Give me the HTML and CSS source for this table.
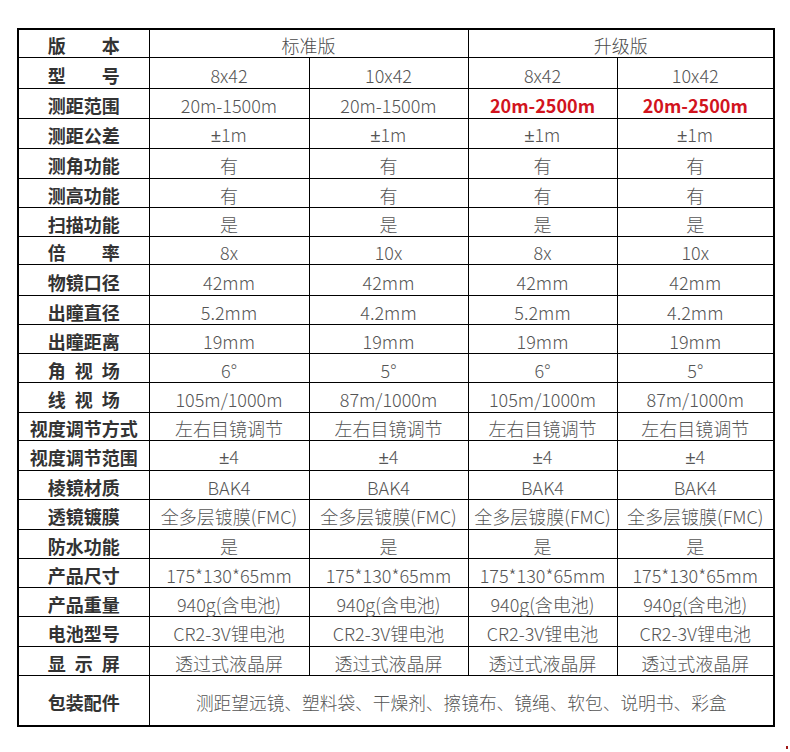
FILE: index.html
```html
<!DOCTYPE html>
<html lang="zh-CN">
<head>
<meta charset="utf-8">
<title>规格参数</title>
<link rel="stylesheet" href="styles.css">
</head>
<body>
<div class="page">
<table class="spec">
  <colgroup>
    <col class="c-label"><col class="c-a"><col class="c-b"><col class="c-c"><col class="c-d">
  </colgroup>
  <tr class="h28"><th><span class="jt">版本</span></th><td colspan="2" class="head">标准版</td><td colspan="2" class="head">升级版</td></tr>
  <tr class="h31"><th><span class="jt">型号</span></th><td>8x42</td><td>10x42</td><td>8x42</td><td>10x42</td></tr>
  <tr class="h30"><th>测距范围</th><td>20m-1500m</td><td>20m-1500m</td><td class="red">20m-2500m</td><td class="red">20m-2500m</td></tr>
  <tr class="h29"><th>测距公差</th><td><span class="pm">±</span>1m</td><td><span class="pm">±</span>1m</td><td><span class="pm">±</span>1m</td><td><span class="pm">±</span>1m</td></tr>
  <tr class="h30"><th>测角功能</th><td>有</td><td>有</td><td>有</td><td>有</td></tr>
  <tr class="h29"><th>测高功能</th><td>有</td><td>有</td><td>有</td><td>有</td></tr>
  <tr class="h29"><th>扫描功能</th><td>是</td><td>是</td><td>是</td><td>是</td></tr>
  <tr class="h28"><th><span class="jt">倍率</span></th><td>8x</td><td>10x</td><td>8x</td><td>10x</td></tr>
  <tr class="h31"><th>物镜口径</th><td>42mm</td><td>42mm</td><td>42mm</td><td>42mm</td></tr>
  <tr class="h29"><th>出瞳直径</th><td>5.2mm</td><td>4.2mm</td><td>5.2mm</td><td>4.2mm</td></tr>
  <tr class="h29"><th>出瞳距离</th><td>19mm</td><td>19mm</td><td>19mm</td><td>19mm</td></tr>
  <tr class="h29"><th><span class="jt">角视场</span></th><td>6°</td><td>5°</td><td>6°</td><td>5°</td></tr>
  <tr class="h30"><th><span class="jt">线视场</span></th><td>105m/1000m</td><td>87m/1000m</td><td>105m/1000m</td><td>87m/1000m</td></tr>
  <tr class="h28"><th>视度调节方式</th><td>左右目镜调节</td><td>左右目镜调节</td><td>左右目镜调节</td><td>左右目镜调节</td></tr>
  <tr class="h30"><th>视度调节范围</th><td><span class="pm">±</span>4</td><td><span class="pm">±</span>4</td><td><span class="pm">±</span>4</td><td><span class="pm">±</span>4</td></tr>
  <tr class="h29"><th>棱镜材质</th><td>BAK4</td><td>BAK4</td><td>BAK4</td><td>BAK4</td></tr>
  <tr class="h30"><th>透镜镀膜</th><td>全多层镀膜(FMC)</td><td>全多层镀膜(FMC)</td><td>全多层镀膜(FMC)</td><td>全多层镀膜(FMC)</td></tr>
  <tr class="h29"><th>防水功能</th><td>是</td><td>是</td><td>是</td><td>是</td></tr>
  <tr class="h29"><th>产品尺寸</th><td>175*130*65mm</td><td>175*130*65mm</td><td>175*130*65mm</td><td>175*130*65mm</td></tr>
  <tr class="h29"><th>产品重量</th><td>940g(含电池)</td><td>940g(含电池)</td><td>940g(含电池)</td><td>940g(含电池)</td></tr>
  <tr class="h30"><th>电池型号</th><td>CR2-3V锂电池</td><td>CR2-3V锂电池</td><td>CR2-3V锂电池</td><td>CR2-3V锂电池</td></tr>
  <tr class="h29"><th><span class="jt">显示屏</span></th><td>透过式液晶屏</td><td>透过式液晶屏</td><td>透过式液晶屏</td><td>透过式液晶屏</td></tr>
  <tr class="h50"><th>包装配件</th><td colspan="4" class="pack">测距望远镜、塑料袋、干燥剂、擦镜布、镜绳、软包、说明书、彩盒</td></tr>
</table>
<span class="mark"></span>
</div>
</body>
</html>
```

FILE: styles.css
```css
html, body {
  margin: 0;
  padding: 0;
  background: #ffffff;
}

.page {
  position: relative;
  width: 790px;
  height: 752px;
  padding: 28px 0 0 17px;
  box-sizing: border-box;
}

.spec {
  border-collapse: collapse;
  table-layout: fixed;
  width: 756px;
  border: 2px solid #000;
  font-family: "Noto Sans CJK SC", "Noto Sans", sans-serif;
}

.c-label { width: 131px; }
.c-a { width: 160px; }
.c-b { width: 159px; }
.c-c { width: 149px; }
.c-d { width: 157px; }

.spec th,
.spec td {
  border: 1px solid #000;
  padding: 3px 0 0 0;
  text-align: center;
  vertical-align: middle;
  line-height: 24px;
  white-space: nowrap;
}

.spec th {
  font-size: 18px;
  font-weight: 700;
  color: #333333;
}

.spec td {
  font-size: 18px;
  font-weight: 300;
  color: #555555;
}

.spec td.head {
  color: #4a4a4a;
}

.spec td.red {
  color: #d2141e;
  font-weight: 700;
}

.spec td.pack {
  font-size: 17.7px;
}

.pm {
  font-family: "Liberation Sans", "DejaVu Sans", sans-serif;
  font-weight: 400;
}

.jt {
  display: inline-block;
  width: 4em;
  text-align: justify;
  text-align-last: justify;
}

.h28 { height: 28px; }
.h29 { height: 29px; }
.h30 { height: 30px; }
.h31 { height: 31px; }
.h50 { height: 50px; }

.mark {
  position: absolute;
  left: 786px;
  top: 746px;
  width: 2px;
  height: 3px;
  background: #a01818;
}
```
